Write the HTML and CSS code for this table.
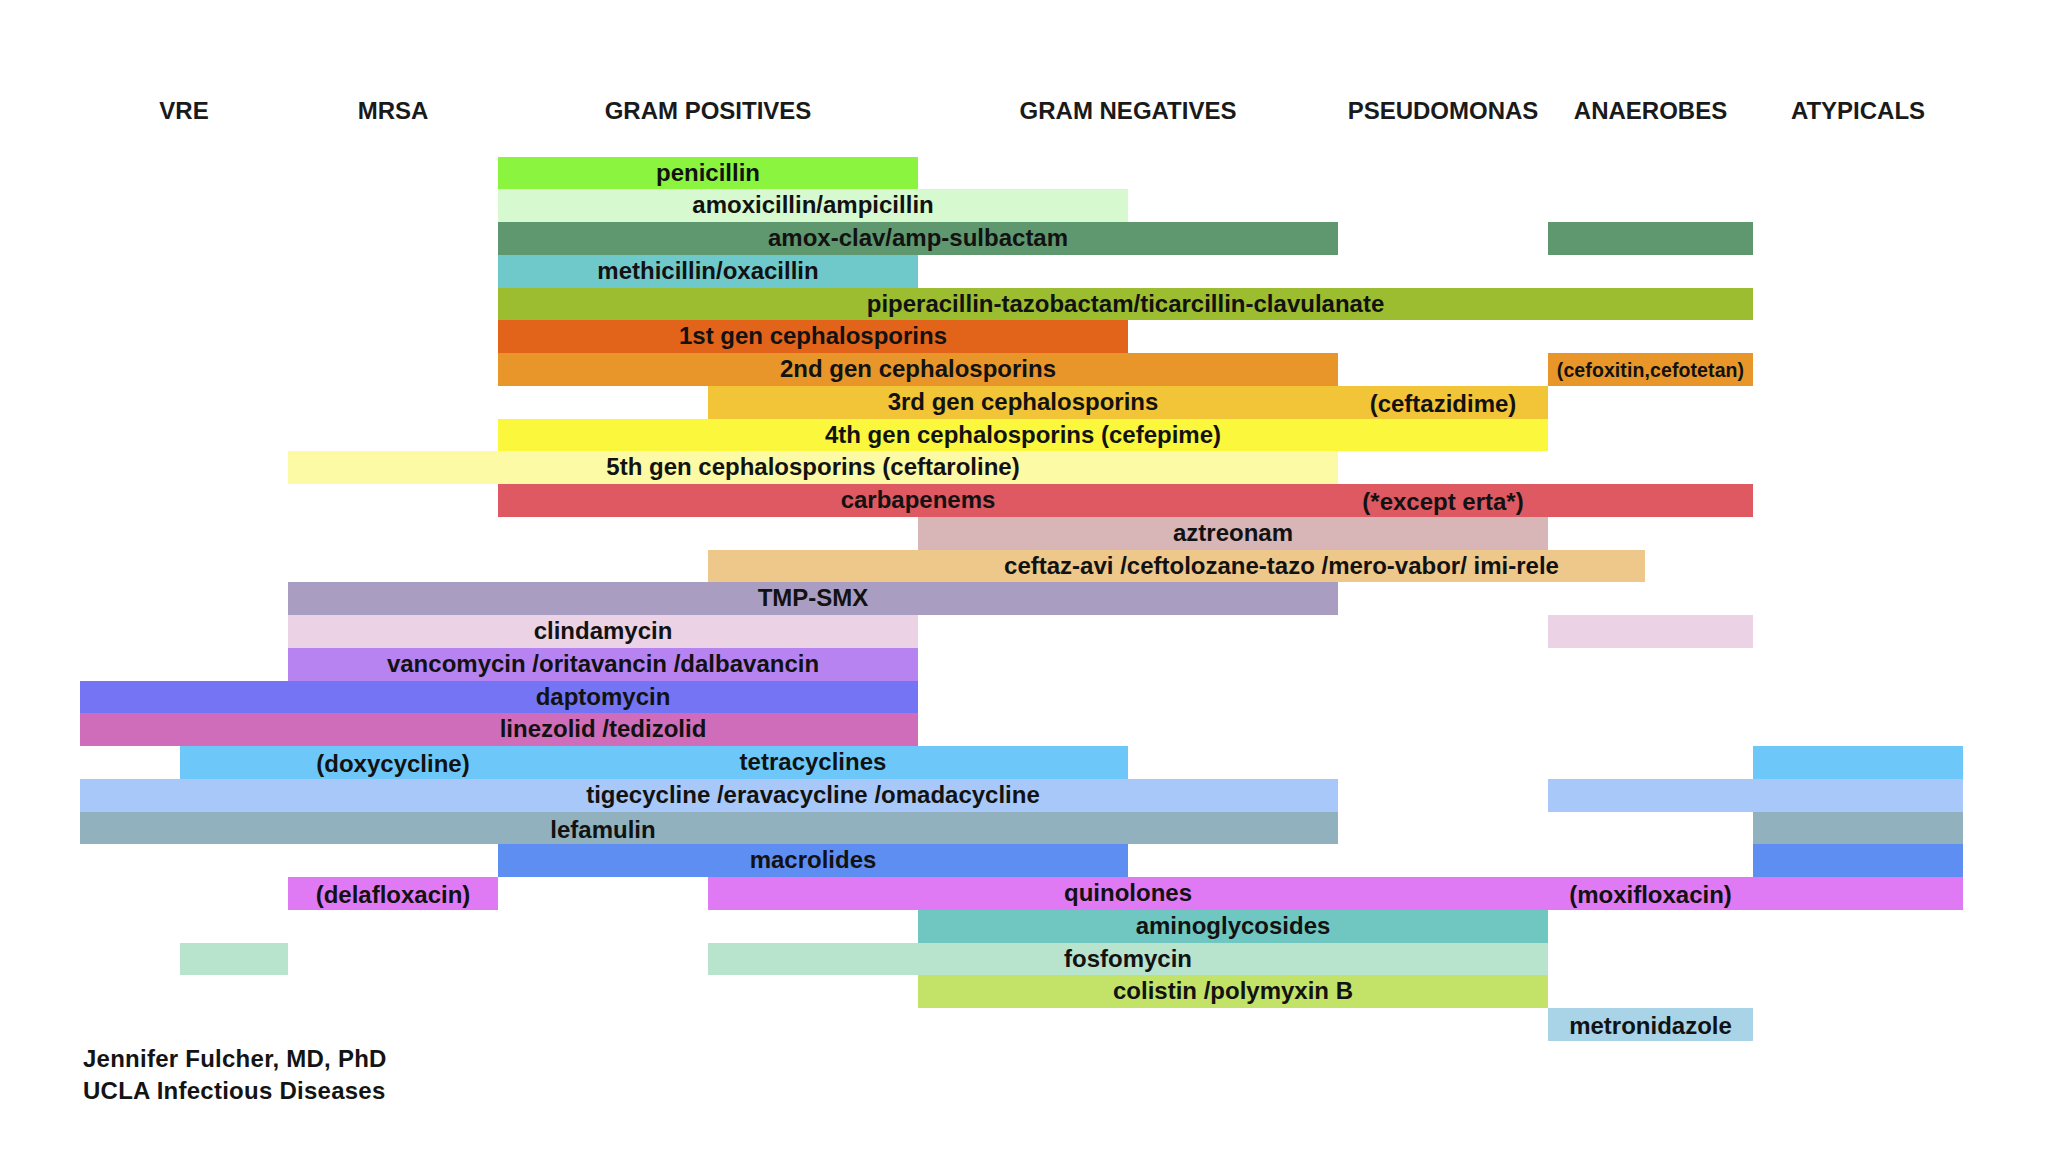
FILE: index.html
```html
<!DOCTYPE html>
<html lang="en">
<head>
<meta charset="utf-8">
<title>Antibiotic coverage chart</title>
<link rel="stylesheet" href="styles.css">
</head>
<body>
<div class="chart">
  <div class="row head">
    <div class="hd" style="grid-column:1/3">VRE</div>
    <div class="hd" style="grid-column:3/5">MRSA</div>
    <div class="hd" style="grid-column:5/9">GRAM POSITIVES</div>
    <div class="hd" style="grid-column:9/13">GRAM NEGATIVES</div>
    <div class="hd" style="grid-column:13/15">PSEUDOMONAS</div>
    <div class="hd" style="grid-column:15/17">ANAEROBES</div>
    <div class="hd" style="grid-column:17/19">ATYPICALS</div>
  </div>

  <div class="bars">
    <div class="row">
      <div class="bar pen" style="grid-column:5/9"></div>
      <div class="lbl" style="grid-column:5/9">penicillin</div>
    </div>
    <div class="row">
      <div class="bar amox" style="grid-column:5/11"></div>
      <div class="lbl" style="grid-column:5/11">amoxicillin/ampicillin</div>
    </div>
    <div class="row">
      <div class="bar amoxclav" style="grid-column:5/13"></div>
      <div class="bar amoxclav" style="grid-column:15/17"></div>
      <div class="lbl" style="grid-column:5/13">amox-clav/amp-sulbactam</div>
    </div>
    <div class="row">
      <div class="bar meth" style="grid-column:5/9"></div>
      <div class="lbl" style="grid-column:5/9">methicillin/oxacillin</div>
    </div>
    <div class="row">
      <div class="bar pip" style="grid-column:5/17"></div>
      <div class="lbl" style="grid-column:5/17">piperacillin-tazobactam/ticarcillin-clavulanate</div>
    </div>
    <div class="row">
      <div class="bar gen1" style="grid-column:5/11"></div>
      <div class="lbl" style="grid-column:5/11">1st gen cephalosporins</div>
    </div>
    <div class="row">
      <div class="bar gen2" style="grid-column:5/13"></div>
      <div class="bar gen2" style="grid-column:15/17"></div>
      <div class="lbl" style="grid-column:5/13">2nd gen cephalosporins</div>
      <div class="lbl small" style="grid-column:15/17">(cefoxitin,cefotetan)</div>
    </div>
    <div class="row">
      <div class="bar gen3" style="grid-column:7/15"></div>
      <div class="lbl" style="grid-column:7/13">3rd gen cephalosporins</div>
      <div class="lbl low" style="grid-column:13/15">(ceftazidime)</div>
    </div>
    <div class="row">
      <div class="bar gen4" style="grid-column:5/15"></div>
      <div class="lbl" style="grid-column:5/15">4th gen cephalosporins (cefepime)</div>
    </div>
    <div class="row">
      <div class="bar gen5" style="grid-column:3/13"></div>
      <div class="lbl" style="grid-column:3/13">5th gen cephalosporins (ceftaroline)</div>
    </div>
    <div class="row">
      <div class="bar carb" style="grid-column:5/17"></div>
      <div class="lbl" style="grid-column:5/13">carbapenems</div>
      <div class="lbl low" style="grid-column:13/15">(*except erta*)</div>
    </div>
    <div class="row">
      <div class="bar azt" style="grid-column:9/15"></div>
      <div class="lbl" style="grid-column:9/15">aztreonam</div>
    </div>
    <div class="row">
      <div class="bar cavi" style="grid-column:7/16"></div>
      <div class="lbl" style="grid-column:9/16">ceftaz-avi /ceftolozane-tazo /mero-vabor/ imi-rele</div>
    </div>
    <div class="row">
      <div class="bar tmp" style="grid-column:3/13"></div>
      <div class="lbl" style="grid-column:3/13">TMP-SMX</div>
    </div>
    <div class="row">
      <div class="bar clinda" style="grid-column:3/9"></div>
      <div class="bar clinda" style="grid-column:15/17"></div>
      <div class="lbl" style="grid-column:3/9">clindamycin</div>
    </div>
    <div class="row">
      <div class="bar vanco" style="grid-column:3/9"></div>
      <div class="lbl" style="grid-column:3/9">vancomycin /oritavancin /dalbavancin</div>
    </div>
    <div class="row">
      <div class="bar dapto" style="grid-column:1/9"></div>
      <div class="lbl" style="grid-column:3/9">daptomycin</div>
    </div>
    <div class="row">
      <div class="bar linez" style="grid-column:1/9"></div>
      <div class="lbl" style="grid-column:3/9">linezolid /tedizolid</div>
    </div>
    <div class="row">
      <div class="bar tetra" style="grid-column:2/11"></div>
      <div class="bar tetra" style="grid-column:17/19"></div>
      <div class="lbl low" style="grid-column:3/5">(doxycycline)</div>
      <div class="lbl" style="grid-column:5/11">tetracyclines</div>
    </div>
    <div class="row">
      <div class="bar tige" style="grid-column:1/13"></div>
      <div class="bar tige" style="grid-column:15/19"></div>
      <div class="lbl" style="grid-column:5/11">tigecycline /eravacycline /omadacycline</div>
    </div>
    <div class="row">
      <div class="bar lefa" style="grid-column:1/13"></div>
      <div class="bar lefa" style="grid-column:17/19"></div>
      <div class="lbl low" style="grid-column:3/9">lefamulin</div>
    </div>
    <div class="row">
      <div class="bar macro" style="grid-column:5/11"></div>
      <div class="bar macro" style="grid-column:17/19"></div>
      <div class="lbl" style="grid-column:5/11">macrolides</div>
    </div>
    <div class="row">
      <div class="bar quin" style="grid-column:3/5"></div>
      <div class="bar quin" style="grid-column:7/19"></div>
      <div class="lbl low" style="grid-column:3/5">(delafloxacin)</div>
      <div class="lbl" style="grid-column:7/15">quinolones</div>
      <div class="lbl low" style="grid-column:15/17">(moxifloxacin)</div>
    </div>
    <div class="row">
      <div class="bar amino" style="grid-column:9/15"></div>
      <div class="lbl" style="grid-column:9/15">aminoglycosides</div>
    </div>
    <div class="row">
      <div class="bar fosfo" style="grid-column:2/3"></div>
      <div class="bar fosfo" style="grid-column:7/15"></div>
      <div class="lbl" style="grid-column:7/15">fosfomycin</div>
    </div>
    <div class="row">
      <div class="bar coli" style="grid-column:9/15"></div>
      <div class="lbl" style="grid-column:9/15">colistin /polymyxin B</div>
    </div>
    <div class="row">
      <div class="bar metro" style="grid-column:15/17"></div>
      <div class="lbl low" style="grid-column:15/17">metronidazole</div>
    </div>
  </div>

  <div class="credits">
    <div>Jennifer Fulcher, MD, PhD</div>
    <div>UCLA Infectious Diseases</div>
  </div>
</div>
</body>
</html>
```

FILE: styles.css
```css
html, body {
  margin: 0;
  padding: 0;
  background: #ffffff;
}

body {
  font-family: "Liberation Sans", Arial, sans-serif;
  font-weight: 700;
  color: #141414;
  width: 2048px;
  height: 1152px;
  overflow: hidden;
}

.chart {
  padding: 96.5px 0 0 80px;
}

.row {
  display: grid;
  grid-template-columns: 100px 108px repeat(12, 105px) 97px 108px 105px 105px;
  grid-template-rows: 32.76px;
}

.row > * {
  grid-row: 1;
}

.head {
  grid-template-rows: 28px;
}

.hd {
  font-size: 24px;
  line-height: 28px;
  text-align: center;
  white-space: nowrap;
  color: #1a1a1a;
}

.bars {
  margin-top: 32.2px;
}

.bar {
  height: 100%;
}

.lbl {
  display: flex;
  justify-content: center;
  align-items: center;
  font-size: 24px;
  line-height: 32.76px;
  white-space: nowrap;
  color: #121212;
}

.lbl.low {
  padding-top: 4px;
  line-height: 28.76px;
}

.lbl.small {
  font-size: 19.5px;
  padding-top: 2px;
  line-height: 30.76px;
  letter-spacing: 0.1px;
}

.pen { background: #8af43f; }
.amox { background: #d6f9cf; }
.amoxclav { background: #5f976e; }
.meth { background: #6fc9ca; }
.pip { background: #9bbd2f; }
.gen1 { background: #e2641b; }
.gen2 { background: #e8962a; }
.gen3 { background: #f2c437; }
.gen4 { background: #faf73c; }
.gen5 { background: #fcfaa4; }
.carb { background: #de5962; }
.azt { background: #d8b5b6; }
.cavi { background: #eec88b; }
.tmp { background: #a99ec1; }
.clinda { background: #ebd3e5; }
.vanco { background: #b783f0; }
.dapto { background: #7474f4; }
.linez { background: #cf6dba; }
.tetra { background: #6dc8f9; }
.tige { background: #a7c8f8; }
.lefa { background: #91b1be; }
.macro { background: #5e8ef2; }
.quin { background: #e07af4; }
.amino { background: #70c7c2; }
.fosfo { background: #b8e3cc; }
.coli { background: #c2e268; }
.metro { background: #a9d3e7; }

.credits {
  margin-top: 2px;
  padding-left: 3px;
  font-size: 24px;
  line-height: 32px;
  letter-spacing: 0.25px;
  color: #141414;
}
```
